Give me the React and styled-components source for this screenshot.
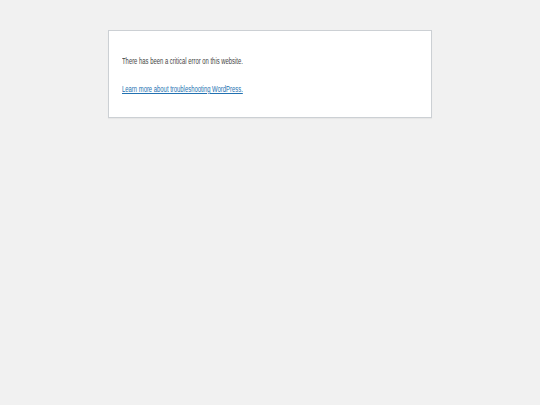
import React from 'react';
import styled, { createGlobalStyle } from 'styled-components';

const GlobalStyle = createGlobalStyle`
    html, body {
        margin: 0;
        padding: 0;
        background: #f1f1f1;
    }
`;

const Page = styled.div`
    display: flex;
    justify-content: center;
    align-items: flex-start;
    padding-top: 30px;
    min-height: 405px;
    box-sizing: border-box;
`;

const ErrorBox = styled.div`
    width: 324px;
    box-sizing: border-box;
    background: #fff;
    border: 1px solid #ccd0d4;
    box-shadow: 0 1px 1px rgba(0, 0, 0, 0.04);
    padding: 24px 13px 22px;
    display: flex;
    flex-direction: column;
    gap: 16px;
    font-family: "Liberation Sans", Arial, sans-serif;
    font-size: 9px;
    line-height: 12px;
    color: #444;
`;

// the reference text is squeezed horizontally
const Message = styled.p`
    margin: 0;
    white-space: nowrap;
    transform: scaleX(0.655);
    transform-origin: left center;
`;

const HelpLink = styled.a`
    color: #2271b1;
    text-decoration: underline;
`;

export default function App() {
  return (
    <>
        <GlobalStyle />
        <Page>
            <ErrorBox>
                <Message>There has been a critical error on this website.</Message>
                <Message>
                    <HelpLink href="#">Learn more about troubleshooting WordPress.</HelpLink>
                </Message>
            </ErrorBox>
        </Page>
    </>
  )
}
